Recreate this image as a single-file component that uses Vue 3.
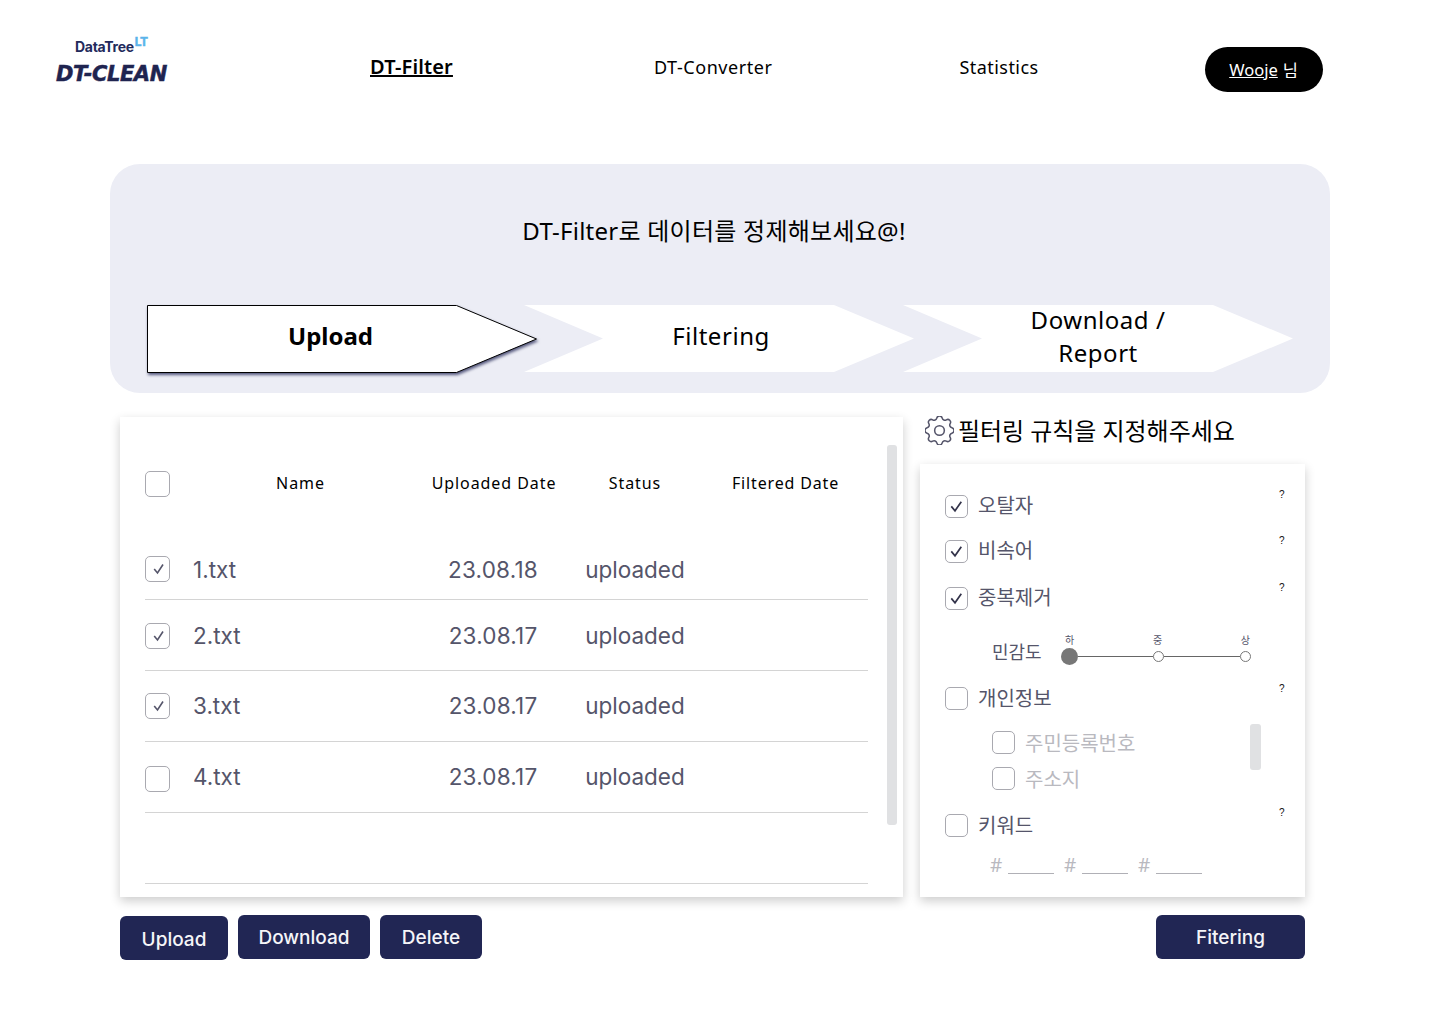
<script setup>
const files = [
  { name: '1.txt', date: '23.08.18', status: 'uploaded', checked: true },
  { name: '2.txt', date: '23.08.17', status: 'uploaded', checked: true },
  { name: '3.txt', date: '23.08.17', status: 'uploaded', checked: true },
  { name: '4.txt', date: '23.08.17', status: 'uploaded', checked: false },
]
</script>

<template>
  <div class="page">
    <header class="top">
      <div class="logo">
        <div class="logo-sub">DataTree<span class="lt">LT</span></div>
        <div class="logo-main">DT-CLEAN</div>
      </div>
      <a class="nav nav-filter">DT-Filter</a>
      <a class="nav nav-converter">DT-Converter</a>
      <a class="nav nav-stats">Statistics</a>
      <div class="user"><u>Wooje</u> 님</div>
    </header>

    <section class="hero">
      <h1>DT-Filter로 데이터를 정제해보세요@!</h1>
      <div class="steps">
        <div class="step step-active">
          <svg class="step-bg" width="392" height="70" viewBox="0 0 392 70">
            <polygon points="0.5,0.5 309.5,0.5 389.5,34 309.5,67.5 0.5,67.5" fill="#fff" stroke="#000" stroke-width="1" />
          </svg>
          <span>Upload</span>
        </div>
        <div class="step step-next step-mid"><span>Filtering</span></div>
        <div class="step step-next step-last"><span>Download /<br />Report</span></div>
      </div>
    </section>

    <main class="content">
      <div class="left">
        <div class="card table-card">
          <div class="scrollbar"></div>
          <div class="thead">
            <span class="box"></span>
            <span class="th th-name">Name</span>
            <span class="th">Uploaded Date</span>
            <span class="th">Status</span>
            <span class="th th-filtered">Filtered Date</span>
          </div>
          <div v-for="f in files" :key="f.name" class="trow">
            <span class="box">
              <svg v-if="f.checked" width="14" height="14" viewBox="0 0 14 14"><path d="M3.2 7 6.5 11 12 2.5" fill="none" stroke="#55556a" stroke-width="1.6" /></svg>
            </span>
            <span class="td-name">{{ f.name }}</span>
            <span class="td td-date">{{ f.date }}</span>
            <span class="td">{{ f.status }}</span>
            <span class="td"></span>
          </div>
          <div class="trow"></div>
        </div>
        <div class="btns">
          <button class="btn btn-upload">Upload</button>
          <button class="btn btn-download">Download</button>
          <button class="btn btn-delete">Delete</button>
        </div>
      </div>

      <div class="right">
        <div class="rules-title">
          <svg width="29" height="29" viewBox="3 3 18 18" fill="none" stroke="#55556a" stroke-width="0.95" stroke-linecap="round" stroke-linejoin="round">
            <path d="M10.325 4.317c.426-1.756 2.924-1.756 3.35 0a1.724 1.724 0 0 0 2.573 1.066c1.543-.94 3.31.826 2.37 2.37a1.724 1.724 0 0 0 1.065 2.572c1.756.426 1.756 2.924 0 3.35a1.724 1.724 0 0 0-1.066 2.573c.94 1.543-.826 3.31-2.37 2.37a1.724 1.724 0 0 0-2.572 1.065c-.426 1.756-2.924 1.756-3.35 0a1.724 1.724 0 0 0-2.573-1.066c-1.543.94-3.31-.826-2.37-2.37a1.724 1.724 0 0 0-1.065-2.572c-1.756-.426-1.756-2.924 0-3.35a1.724 1.724 0 0 0 1.066-2.573c-.94-1.543.826-3.31 2.37-2.37 1 .608 2.296.07 2.572-1.065z" />
            <circle cx="12" cy="12" r="3" />
          </svg>
          <h2>필터링 규칙을 지정해주세요</h2>
        </div>
        <div class="card rules-card">
          <div class="rule rule-1">
            <span class="box sm"><svg width="15" height="15" viewBox="0 0 15 15"><path d="M2.3 7.4 6 11.8 12.3 2.8" fill="none" stroke="#33334a" stroke-width="1.7" /></svg></span>
            <span class="rule-label">오탈자</span><span class="help">?</span>
          </div>
          <div class="rule rule-2">
            <span class="box sm"><svg width="15" height="15" viewBox="0 0 15 15"><path d="M2.3 7.4 6 11.8 12.3 2.8" fill="none" stroke="#33334a" stroke-width="1.7" /></svg></span>
            <span class="rule-label">비속어</span><span class="help">?</span>
          </div>
          <div class="rule rule-3">
            <span class="box sm"><svg width="15" height="15" viewBox="0 0 15 15"><path d="M2.3 7.4 6 11.8 12.3 2.8" fill="none" stroke="#33334a" stroke-width="1.7" /></svg></span>
            <span class="rule-label">중복제거</span><span class="help">?</span>
          </div>

          <div class="sens">
            <span class="sens-label">민감도</span>
            <div class="slider">
              <div class="slider-labels"><span>하</span><span>중</span><span>상</span></div>
              <div class="slider-track">
                <span class="dot dot-on"></span>
                <span class="dash dash-a"></span>
                <span class="dot"></span>
                <span class="dash dash-b"></span>
                <span class="dot"></span>
              </div>
            </div>
          </div>

          <div class="rule rule-4">
            <span class="box sm"></span>
            <span class="rule-label">개인정보</span><span class="help">?</span>
          </div>
          <div class="subs">
            <div class="sub-list">
              <div class="sub"><span class="box sm"></span><span class="sub-label">주민등록번호</span></div>
              <div class="sub"><span class="box sm"></span><span class="sub-label">주소지</span></div>
            </div>
            <div class="sub-thumb"></div>
          </div>
          <div class="rule rule-5">
            <span class="box sm"></span>
            <span class="rule-label">키워드</span><span class="help">?</span>
          </div>
          <div class="tags">
            <span class="tag"><i>#</i><b></b></span>
            <span class="tag"><i>#</i><b></b></span>
            <span class="tag"><i>#</i><b></b></span>
          </div>
        </div>
        <div class="right-btn">
          <button class="btn btn-filter">Fitering</button>
        </div>
      </div>
    </main>
  </div>
</template>

<style>
html,
body {
  margin: 0;
  background: #fff;
}
</style>

<style scoped>
.page {
  width: 1440px;
  height: 1024px;
  overflow: hidden;
  font-family: 'Noto Sans', 'Noto Sans CJK KR', sans-serif;
  color: #000;
}

/* header */
.top {
  height: 164px;
  box-sizing: border-box;
  padding: 38px 0 0 56px;
  display: flex;
  align-items: flex-start;
}
.logo {
  width: 120px;
  display: flex;
  flex-direction: column;
  align-items: flex-start;
}
.logo-sub {
  margin-left: 19px;
  font: 700 14px/18px 'Inter', sans-serif;
  color: #222a5c;
  letter-spacing: -0.3px;
  position: relative;
}
.lt {
  position: absolute;
  left: 100%;
  top: -3px;
  margin-left: 1px;
  font-size: 12px;
  line-height: 14px;
  letter-spacing: -0.5px;
  color: #5ab4ea;
  -webkit-text-stroke: 0.5px #5ab4ea;
}
.logo-main {
  margin-top: 4px;
  font: italic 700 21px/29px 'DejaVu Sans', sans-serif;
  color: #1f2450;
  letter-spacing: -0.45px;
  white-space: nowrap;
  -webkit-text-stroke: 0.5px #1f2450;
}
.nav {
  margin-top: 16px;
  font-size: 18px;
  line-height: 26px;
  letter-spacing: 0.55px;
  white-space: nowrap;
}
.nav-filter {
  margin-left: 194px;
  font-weight: 600;
  font-size: 20px;
  letter-spacing: 0.15px;
  text-decoration: underline;
}
.nav-converter {
  margin-left: 201px;
}
.nav-stats {
  margin-left: 187px;
  letter-spacing: 0.45px;
}
.user {
  margin-left: 166px;
  margin-top: 9px;
  width: 118px;
  height: 45px;
  border-radius: 23px;
  background: #000;
  color: #fff;
  display: flex;
  align-items: center;
  justify-content: center;
  font-size: 16.5px;
  gap: 5px;
}

/* hero */
.hero {
  margin-left: 110px;
  width: 1220px;
  height: 229px;
  border-radius: 30px;
  background: #ecedf5;
  box-sizing: border-box;
  padding-top: 49px;
}
.hero h1 {
  margin: 0;
  padding-right: 12px;
  height: 92px;
  text-align: center;
  font-size: 24px;
  line-height: 36px;
  font-weight: 400;
  letter-spacing: 0.25px;
}
.steps {
  display: flex;
  padding-left: 37px;
}
.step {
  width: 390px;
  height: 68px;
  flex: none;
  position: relative;
  display: flex;
  align-items: center;
  justify-content: center;
  text-align: center;
  font-size: 24px;
  line-height: 33px;
  letter-spacing: 0.55px;
  box-sizing: border-box;
  padding-bottom: 6px;
}
.step span {
  position: relative;
}
.step-active {
  font-weight: 700;
  letter-spacing: 0;
  padding-right: 23px;
  padding-bottom: 7px;
}
.step-bg {
  position: absolute;
  left: 0;
  top: 0;
  filter: drop-shadow(1px 2px 1.5px rgba(33, 38, 84, 0.75));
}
.step-next {
  margin-left: -11px;
  background: #fff;
  height: 67px;
  clip-path: polygon(0 0, 310px 0, 100% 50%, 310px 100%, 0 100%, 79px 50%);
}
.step-mid {
  margin-left: -13px;
  padding-left: 4px;
}

/* content */
.content {
  display: flex;
  margin-left: 120px;
  margin-top: 24px;
}
.left {
  width: 783px;
}
.card {
  background: #fff;
  box-shadow: 0 4px 10px rgba(0, 0, 0, 0.2);
  position: relative;
}
.table-card {
  height: 480px;
  box-sizing: border-box;
  padding: 52px 35px 0 25px;
}
.scrollbar {
  position: absolute;
  left: 767px;
  top: 28px;
  width: 10px;
  height: 380px;
  border-radius: 3px;
  background: #e0e1e3;
}
.box {
  display: flex;
  align-items: center;
  justify-content: center;
  width: 23px;
  height: 24px;
  border: 1px solid #a9a9b0;
  border-radius: 5px;
  background: #fff;
  box-sizing: content-box;
  flex: none;
}
.box.sm {
  width: 21px;
  height: 21px;
}
.thead,
.trow {
  display: grid;
  grid-template-columns: 48px 231px 140px 142px 162px;
  align-items: center;
}
.thead {
  height: 28px;
  margin-bottom: 34px;
  margin-top: 1px;
}
.th {
  font-size: 16px;
  letter-spacing: 0.93px;
  text-align: center;
  white-space: nowrap;
  position: relative;
  top: -1px;
}
.th-name {
  padding-right: 16px;
}
.th-filtered {
  padding-right: 3px;
  letter-spacing: 0.85px;
}
.trow {
  height: 71px;
  border-bottom: 1px solid #d4d4d4;
  box-sizing: border-box;
  padding-bottom: 1px;
  font-family: 'Inter', 'Noto Sans', sans-serif;
  font-size: 22.5px;
  color: #55556a;
}
.trow:nth-child(3) {
  height: 68px;
  padding-top: 7px;
  padding-bottom: 0;
}
.trow:nth-child(4) {
  padding-top: 1px;
  padding-bottom: 0;
}
.trow:nth-child(6) .box {
  margin-top: 4px;
}
.td {
  text-align: center;
}
.td-date {
  padding-right: 2px;
  letter-spacing: 0.2px;
}
.btns {
  display: flex;
  align-items: flex-start;
  gap: 10px;
  margin-top: 18px;
}
.btn {
  border: none;
  background: #212654;
  color: #f5f5f8;
  border-radius: 6px;
  height: 44px;
  font-family: 'Inter', sans-serif;
  font-size: 19px;
  font-weight: 500;
  padding: 0;
  flex: none;
}
.btn-upload {
  width: 108px;
  margin-top: 1px;
  padding-top: 2px;
}
.btn-download {
  width: 132px;
}
.btn-delete {
  width: 102px;
}

/* rules */
.right {
  margin-left: 17px;
  width: 385px;
}
.rules-title {
  height: 48px;
  margin-left: 5px;
  display: flex;
  align-items: flex-start;
  gap: 4px;
  margin-top: -1px;
}
.rules-title h2 {
  margin: 0;
  font-size: 24px;
  line-height: 28px;
  font-weight: 400;
  padding-top: 1px;
  letter-spacing: -0.05px;
}
.rules-card {
  height: 433px;
  box-sizing: border-box;
  padding-left: 25px;
  color: #55556a;
}
.rule {
  display: flex;
  align-items: center;
  height: 24px;
  position: relative;
}
.rule-label {
  margin-left: 10px;
  font-size: 20px;
  line-height: 24px;
}
.help {
  position: absolute;
  left: 334px;
  top: -4px;
  font: 400 10px/12px 'Liberation Sans', sans-serif;
  color: #111;
}
.rule-1 {
  padding-top: 30px;
}
.rule-1 .help {
  top: 25px;
}
.rule-2 {
  margin-top: 21px;
}
.rule-3 {
  margin-top: 23px;
}
.rule-4 {
  margin-top: 20px;
}
.rule-4 .help {
  top: -3px;
}
.rule-4 .rule-label,
.rule-5 .rule-label {
  position: relative;
  top: 1px;
}
.rule-5 {
  margin-top: 23px;
}
.rule-5 .help {
  top: -6px;
}
.sens {
  display: flex;
  margin-top: 26px;
  margin-left: 47px;
  height: 30px;
}
.sens-label {
  font-size: 18px;
  line-height: 30px;
  width: 70px;
  flex: none;
  position: relative;
  top: 1px;
}
.slider {
  width: 190px;
  margin-left: -1px;
}
.slider-labels {
  display: flex;
  justify-content: space-between;
  font-size: 10px;
  line-height: 10px;
  height: 10px;
  margin-top: -1px;
  margin-bottom: 2px;
  padding: 0 1px 0 4px;
}
.slider-track {
  display: flex;
  align-items: center;
  height: 18px;
}
.dot {
  width: 9px;
  height: 9px;
  border: 1px solid #777;
  border-radius: 50%;
  background: #fff;
  flex: none;
}
.dot-on {
  width: 17px;
  height: 17px;
  border: none;
  background: #777;
}
.dash {
  height: 1px;
  background: #666;
  flex: none;
}
.dash-a {
  width: 75px;
}
.dash-b {
  width: 76px;
}
.subs {
  display: flex;
  margin-top: 20px;
  margin-left: 47px;
  position: relative;
}
.sub-list {
  display: flex;
  flex-direction: column;
  gap: 12px;
}
.sub {
  display: flex;
  align-items: center;
  height: 24px;
}
.sub-label {
  margin-left: 10px;
  font-size: 20px;
  color: #b9b9bf;
}
.sub-thumb {
  position: absolute;
  left: 258px;
  top: -6px;
  width: 11px;
  height: 46px;
  border-radius: 3px;
  background: #e0e1e3;
}
.tags {
  display: flex;
  margin-top: 14px;
  margin-left: 45px;
  gap: 10px;
}
.tag {
  display: flex;
  align-items: flex-end;
  gap: 6px;
  height: 26px;
}
.tag i {
  font-style: normal;
  font-size: 19px;
  line-height: 24px;
  color: #b9b9bf;
  width: 12px;
}
.tag b {
  display: block;
  width: 46px;
  height: 1px;
  margin-bottom: 3px;
  background: #b0b0b6;
}
.right-btn {
  display: flex;
  justify-content: flex-end;
  margin-top: 18px;
}
.btn-filter {
  width: 149px;
}
</style>
